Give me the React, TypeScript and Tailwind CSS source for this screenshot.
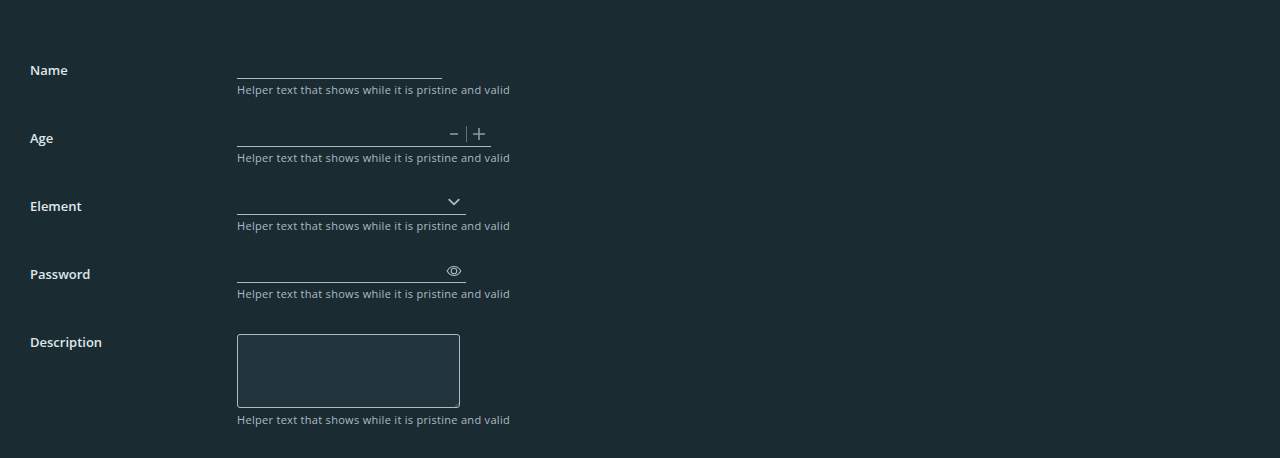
import type { ReactNode } from "react";

const HELPER = "Helper text that shows while it is pristine and valid";

function Helper() {
  return (
    <p className="mt-[3px] h-4 w-max text-[11px] leading-4 tracking-[0.3px] text-[#adbbc4]">{HELPER}</p>
  );
}

function Row({ label, id, children }: { label: string; id: string; children: ReactNode }) {
  return (
    <div className="flex min-h-[68px] items-start">
      <label
        htmlFor={id}
        className="mt-2 w-[207px] shrink-0 text-[13px] leading-4 font-semibold text-[#dfe7eb]"
      >
        {label}
      </label>
      <div>{children}</div>
    </div>
  );
}

const inputClass = "block h-6 min-w-0 flex-1 bg-transparent px-1.5 text-[13px] text-[#e9ecef] outline-none";

export default function App() {
  return (
    <div className="flex h-[458px] w-full flex-col overflow-hidden bg-[#1b2b32] font-['Open_Sans','Noto_Sans',sans-serif]">
      <form className="flex flex-col pt-[54px] pl-[30px]">
        <Row label="Name" id="name">
          <div className="flex h-[25px] w-[205px] border-b border-[#adbbc4]">
            <input id="name" className={inputClass} />
          </div>
          <Helper />
        </Row>
        <Row label="Age" id="age">
          <div className="flex h-[25px] w-[254px] border-b border-[#adbbc4]">
            <input id="age" className={inputClass} />
            <div className="flex h-6 items-center">
              <button type="button" aria-label="Decrease" className="flex h-6 w-[25px] items-center justify-center">
                <svg width="16" height="16" viewBox="0 0 16 16" fill="none" stroke="#899aa2">
                  <path d="M4 8h8" strokeWidth="1.6" />
                </svg>
              </button>
              <span className="h-4 w-px bg-[#60717a]" />
              <button type="button" aria-label="Increase" className="flex h-6 w-6 items-center justify-center">
                <svg width="16" height="16" viewBox="0 0 16 16" fill="none" stroke="#899aa2">
                  <path d="M2 8h12M8 2v12" strokeWidth="1.6" />
                </svg>
              </button>
            </div>
          </div>
          <Helper />
        </Row>
        <Row label="Element" id="element">
          <div className="flex h-[25px] w-[229px] border-b border-[#adbbc4]">
            <input id="element" className={inputClass} />
            <button type="button" aria-label="Open" className="flex h-6 w-6 items-center justify-center">
              <svg width="16" height="16" viewBox="0 0 16 16" fill="none" stroke="#adbbc4">
                <path d="M3.2 5.7L8 10.4l4.8-4.7" strokeWidth="1.8" strokeLinecap="round" strokeLinejoin="round" />
              </svg>
            </button>
          </div>
          <Helper />
        </Row>
        <Row label="Password" id="password">
          <div className="flex h-[25px] w-[229px] border-b border-[#adbbc4]">
            <input id="password" type="password" className={inputClass} />
            <button type="button" aria-label="Show" className="flex h-6 w-6 items-center justify-center pt-0.5">
              <svg width="16" height="16" viewBox="0 0 16 16" fill="none" stroke="#adbbc4">
                <path d="M1.2 8C2.8 5 5.2 3.5 8 3.5S13.2 5 14.8 8C13.2 11 10.8 12.5 8 12.5S2.8 11 1.2 8z" strokeWidth="1.1" />
                <circle cx="8" cy="8" r="2.8" strokeWidth="1.1" />
              </svg>
            </button>
          </div>
          <Helper />
        </Row>
        <Row label="Description" id="description">
          <div className="relative mt-2 h-[74px] w-[223px]">
            <textarea
              id="description"
              className="block size-full resize-none rounded-[3px] border border-[#adbbc4] bg-[#22343c] px-1.5 py-1 text-[13px] text-[#e9ecef] outline-none"
            />
            <svg className="absolute right-px bottom-px" width="5" height="5" viewBox="0 0 5 5" fill="#4b5258">
              <path d="M5 0v3.5L3.5 5H0z" />
            </svg>
          </div>
          <div className="pt-px">
            <Helper />
          </div>
        </Row>
      </form>
    </div>
  );
}
